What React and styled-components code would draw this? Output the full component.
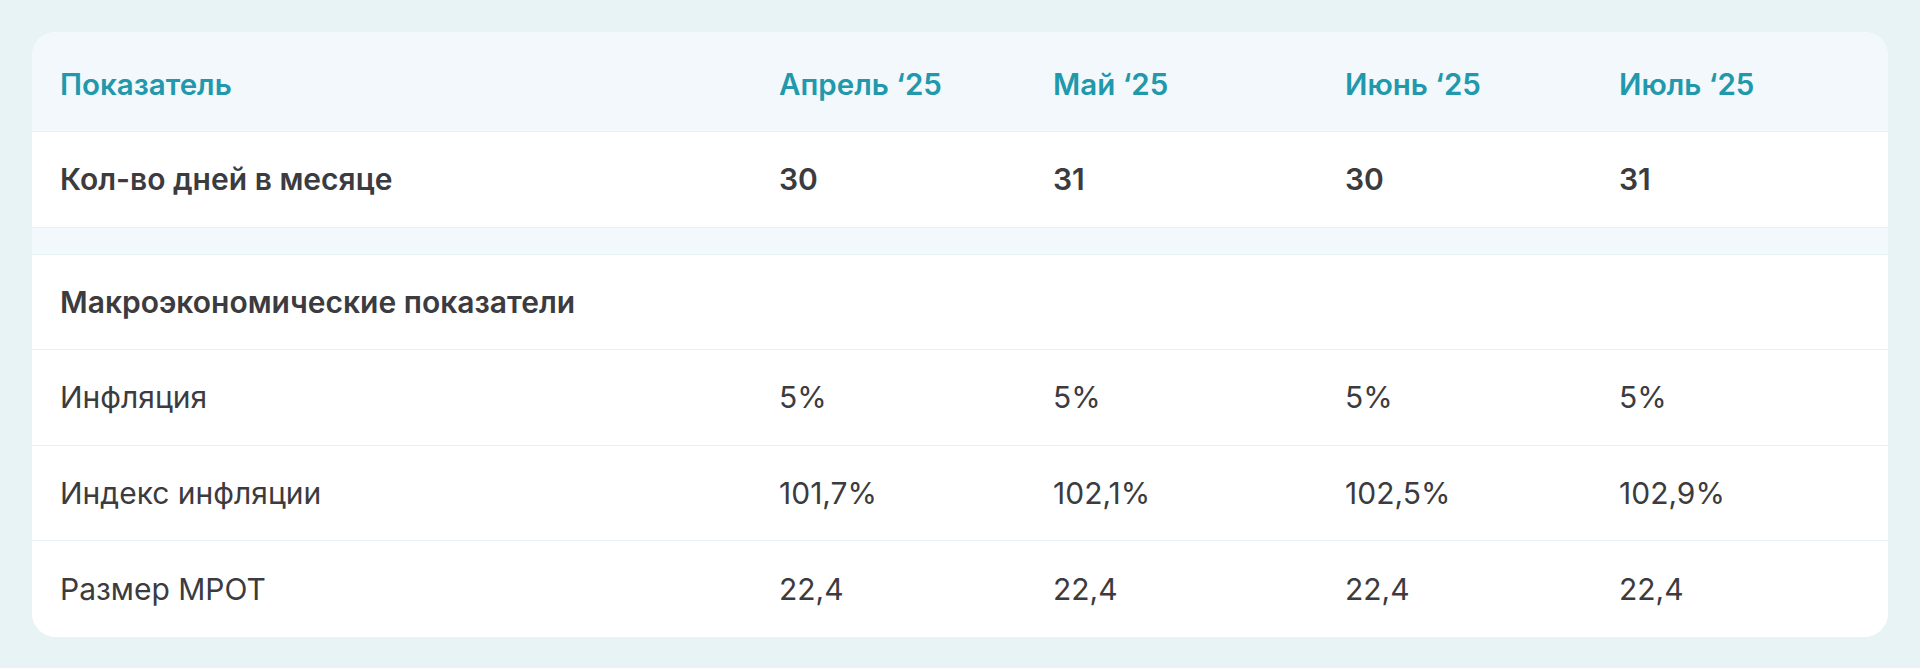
import styled, { createGlobalStyle } from "styled-components";

const GlobalStyle = createGlobalStyle`
  body {
    margin: 0;
    background: #e7f3f5;
    font-family: Inter, "Noto Sans", sans-serif;
  }
`;

const Page = styled.div`
  padding: 32px;
`;

const Card = styled.div`
  background: #ffffff;
  border-radius: 24px;
  overflow: hidden;
`;

const Row = styled.div`
  display: grid;
  grid-template-columns: 719px 274px 292px 274px 1fr;
  align-items: center;
  box-sizing: border-box;
  height: ${(props) => props.$height || "95.5px"};
  padding-top: ${(props) => props.$shift || "0"};
  background: ${(props) => (props.$tinted ? "#f2f8fb" : "#ffffff")};
  border-bottom: ${(props) => (props.$last ? "none" : "1px solid #e6f1f4")};
`;

const Cell = styled.div`
  padding-left: 28px;
  font-size: ${(props) => (props.$variant === "head" ? "29.5px" : "30px")};
  font-weight: ${(props) => (props.$variant === "body" ? 400 : 600)};
  color: ${(props) => (props.$variant === "head" ? "#2198ab" : "#3b3b40")};
  white-space: nowrap;
`;

const months = ["Апрель ‘25", "Май ‘25", "Июнь ‘25", "Июль ‘25"];

const rows = [
  { label: "Инфляция", values: ["5%", "5%", "5%", "5%"] },
  { label: "Индекс инфляции", values: ["101,7%", "102,1%", "102,5%", "102,9%"] },
  { label: "Размер МРОТ", values: ["22,4", "22,4", "22,4", "22,4"] },
];

function App() {
  return (
    <>
      <GlobalStyle />
      <Page>
        <Card>
          <Row $tinted $height="100px" $shift="4px">
            <Cell $variant="head">Показатель</Cell>
            {months.map((m) => (
              <Cell key={m} $variant="head">
                {m}
              </Cell>
            ))}
          </Row>
          <Row>
            <Cell $variant="strong">Кол-во дней в месяце</Cell>
            {["30", "31", "30", "31"].map((d, i) => (
              <Cell key={i} $variant="strong">
                {d}
              </Cell>
            ))}
          </Row>
          <Row $tinted $height="27px" />
          <Row>
            <Cell $variant="strong">Макроэкономические показатели</Cell>
          </Row>
          {rows.map((r, idx) => (
            <Row key={r.label} $last={idx === rows.length - 1}>
              <Cell $variant="body">{r.label}</Cell>
              {r.values.map((v, i) => (
                <Cell key={i} $variant="body">
                  {v}
                </Cell>
              ))}
            </Row>
          ))}
        </Card>
      </Page>
    </>
  );
}

export default App;
